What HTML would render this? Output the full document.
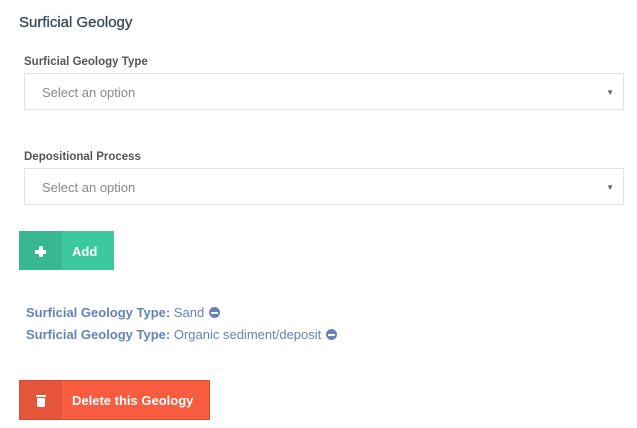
<!DOCTYPE html>
<html><head><style>
body{margin:0;width:637px;height:428px;background:#fff;font-family:"Liberation Sans",sans-serif;position:relative;overflow:hidden}
.a{position:absolute}
.t{left:19px;top:14px;font-size:15px;color:#34495e;-webkit-text-stroke:0.3px #34495e}
.l{left:24px;font-size:11.5px;font-weight:bold;color:#555}
.s{left:24px;width:598px;height:35px;border:1px solid #e3e3e3;font-size:13px;color:#8a8a8a;line-height:37px;box-sizing:content-box}
.s span{margin-left:17px}
.s i{position:absolute;right:9px;top:0px;font-style:normal;font-size:8px;color:#666}
.btn{color:#fff;font-weight:bold;font-size:13px}
.li{left:26px;font-size:13px;color:#6583b8}
.li b{font-weight:bold}
.m{display:inline-block;width:11px;height:11px;border-radius:50%;background:#6583b8;vertical-align:-1px;position:relative;margin-left:1px}
.m:after{content:"";position:absolute;left:2px;right:2px;top:4.5px;height:2px;background:#fff}
</style></head><body>
<div class="a t">Surficial Geology</div>
<div class="a l" style="top:56px">Surficial Geology Type</div>
<div class="a s" style="top:73px"><span>Select an option</span><i>▼</i></div>
<div class="a l" style="top:151px">Depositional Process</div>
<div class="a s" style="top:168px"><span>Select an option</span><i>▼</i></div>
<div class="a btn" style="left:19px;top:231px;width:95px;height:39px;background:#3cc9a0">
 <div class="a" style="left:0;top:0;width:43px;height:39px;background:#37b890"></div>
 <div class="a" style="left:16px;top:18.5px;width:11px;height:4px;background:#fff;border-radius:1px"></div>
 <div class="a" style="left:19.5px;top:15px;width:4px;height:11px;background:#fff;border-radius:1px"></div>
 <div class="a" style="left:53px;top:13px">Add</div>
</div>
<div class="a li" style="top:305px"><b>Surficial Geology Type:</b> Sand <span class="m"></span></div>
<div class="a li" style="top:327px"><b>Surficial Geology Type:</b> Organic sediment/deposit <span class="m"></span></div>
<div class="a btn" style="left:19px;top:380px;width:189px;height:38px;background:#f65c3d;border:1px solid #dc4a2c">
 <div class="a" style="left:0;top:0;width:42px;height:38px;background:#e5553a"></div>
 <div class="a" style="left:16px;top:14px;width:10px;height:2px;background:#fff"></div>
 <div class="a" style="left:17px;top:17px;width:8px;height:9px;background:#fff;border-radius:0 0 2px 2px"></div>
 <div class="a" style="left:52px;top:12px">Delete this Geology</div>
</div>
</body></html>
